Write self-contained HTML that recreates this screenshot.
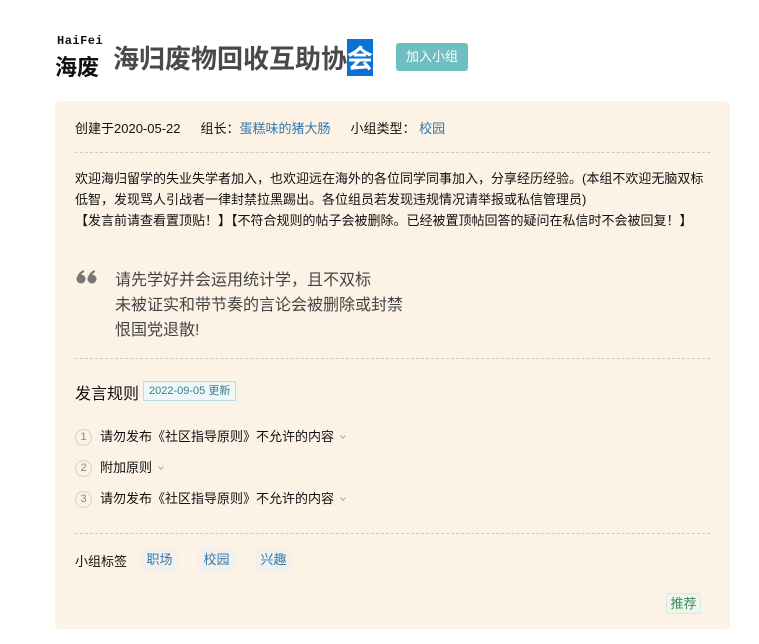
<!DOCTYPE html>
<html><head><meta charset="utf-8"><style>
*{margin:0;padding:0;box-sizing:border-box}
body{width:759px;height:644px;background:#fff;font-family:"Liberation Sans","Noto Sans CJK SC",sans-serif;color:#111;position:relative;overflow:hidden}
.a{position:absolute;white-space:nowrap}
.card{position:absolute;left:55px;top:101px;width:675px;height:528px;background:#fcf2e6;border-radius:4px}
.dot{position:absolute;left:75px;width:635px;border-top:1px dashed #cfc8bd}
.blue{color:#3377aa}
.t{font-size:13px}
.num{display:inline-block;width:17px;height:17px;border:1px solid #d6d2cc;border-radius:50%;font-size:11px;line-height:15px;text-align:center;color:#888;margin-right:8px;vertical-align:middle}
.chev{display:inline-block;width:4px;height:4px;border-right:1px solid #aaa;border-bottom:1px solid #aaa;transform:rotate(45deg);margin-left:7px;vertical-align:3px}
.tag{position:absolute;top:549px;height:22px;width:37px;background:#f2f1ee;color:#3377aa;font-size:13px;line-height:22px;text-align:center;border-radius:2px}
</style></head><body>
<div class="a" style="left:57px;top:34px;font-family:'Liberation Mono',monospace;font-size:12px;font-weight:bold;letter-spacing:0.5px">HaiFei</div>
<div class="a" style="left:55px;top:50px;font-size:22px;font-weight:bold;font-family:'Noto Sans CJK SC',sans-serif;line-height:32px">海废</div>
<div class="a" style="left:113px;top:40px;font-size:26px;font-weight:bold;color:#494949;font-family:'Noto Sans CJK SC',sans-serif;line-height:36px">海归废物回收互助协<span style="background:#0a72d6;color:#fff">会</span></div>
<div class="a" style="left:396px;top:43px;width:72px;height:28px;background:#6fbec1;color:#fff;border-radius:3px;font-size:13px;line-height:28px;text-align:center">加入小组</div>
<div class="card"></div>
<div class="a t" style="left:75px;top:118px">创建于2020-05-22<span style="margin-left:20px">组长：</span><span class="blue">蛋糕味的猪大肠</span><span style="margin-left:20px">小组类型：</span> <span class="blue">校园</span></div>
<div class="dot" style="top:152px"></div>
<div class="a t" style="left:75px;top:168px;line-height:21px;white-space:normal;width:640px">欢迎海归留学的失业失学者加入，也欢迎远在海外的各位同学同事加入，分享经历经验。(本组不欢迎无脑双标低智，发现骂人引战者一律封禁拉黑踢出。各位组员若发现违规情况请举报或私信管理员)<br>【发言前请查看置顶贴！】【不符合规则的帖子会被删除。已经被置顶帖回答的疑问在私信时不会被回复！】</div>
<svg class="a" style="left:76px;top:270px" width="22" height="14" viewBox="0 0 22 14"><g fill="#777"><circle cx="5" cy="9" r="4.5"/><path d="M1 8 Q2 2 8 0 L8 2 Q4 4 4 8 Z"/><circle cx="16" cy="9" r="4.5"/><path d="M12 8 Q13 2 19 0 L19 2 Q15 4 15 8 Z"/></g></svg>
<div class="a" style="left:115px;top:268px;font-size:16px;line-height:25px;color:#444">请先学好并会运用统计学，且不双标<br>未被证实和带节奏的言论会被删除或封禁<br>恨国党退散!</div>
<div class="dot" style="top:358px"></div>
<div class="a" style="left:75px;top:380px;font-size:16px">发言规则</div>
<div class="a" style="left:143px;top:381px;height:20px;padding:0 5px;border:1px solid #b9dde3;background:#eef8f8;color:#3a7f8e;font-size:11px;line-height:18px">2022-09-05 更新</div>
<div class="a t" style="left:75px;top:426px"><span class="num">1</span>请勿发布《社区指导原则》不允许的内容<span class="chev"></span></div>
<div class="a t" style="left:75px;top:457px"><span class="num">2</span>附加原则<span class="chev"></span></div>
<div class="a t" style="left:75px;top:488px"><span class="num">3</span>请勿发布《社区指导原则》不允许的内容<span class="chev"></span></div>
<div class="dot" style="top:533px"></div>
<div class="a t" style="left:75px;top:551px">小组标签</div>
<div class="tag" style="left:141px">职场</div>
<div class="tag" style="left:198px">校园</div>
<div class="tag" style="left:255px">兴趣</div>
<div class="a" style="left:666px;top:593px;width:35px;height:21px;background:#eef5ec;border:1px solid #d8ebdd;color:#3f8a57;font-size:13px;line-height:19px;text-align:center;border-radius:2px">推荐</div>
</body></html>
